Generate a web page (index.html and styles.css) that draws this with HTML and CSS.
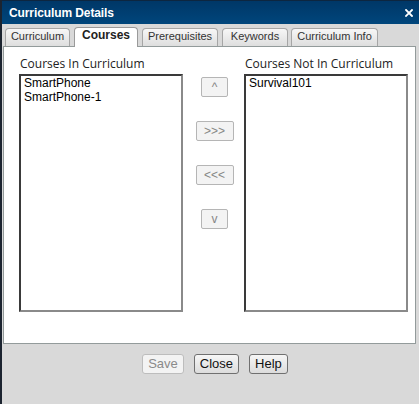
FILE: index.html
```html
<!DOCTYPE html>
<html>
<head>
<meta charset="utf-8">
<link rel="stylesheet" href="styles.css">
</head>
<body>
<div class="dialog">
  <div class="titlebar">
    <span class="title">Curriculum Details</span>
    <svg class="close" width="8" height="8" viewBox="0 0 8 8"><path d="M1 1L7 7M7 1L1 7" stroke="#fff" stroke-width="1.8" stroke-linecap="square"/></svg>
  </div>
  <div class="tabs">
    <div class="tab t-curr">Curriculum</div>
    <div class="tab active t-courses">Courses</div>
    <div class="tab t-prereq">Prerequisites</div>
    <div class="tab t-keys">Keywords</div>
    <div class="tab t-info">Curriculum Info</div>
  </div>
  <div class="panel">
    <div class="col">
      <div class="label">Courses In Curriculum</div>
      <div class="list">
        <div class="item">SmartPhone</div>
        <div class="item">SmartPhone-1</div>
      </div>
    </div>
    <div class="mid">
      <button class="mv small">^</button>
      <button class="mv wide">&gt;&gt;&gt;</button>
      <button class="mv wide">&lt;&lt;&lt;</button>
      <button class="mv small">v</button>
    </div>
    <div class="col">
      <div class="label">Courses Not In Curriculum</div>
      <div class="list">
        <div class="item">Survival101</div>
      </div>
    </div>
  </div>
  <div class="footer">
    <button class="btn disabled">Save</button>
    <button class="btn">Close</button>
    <button class="btn">Help</button>
  </div>
</div>
</body>
</html>
```
FILE: styles.css
```css
html, body {
  margin: 0;
  padding: 0;
}
body {
  width: 419px;
  height: 404px;
  overflow: hidden;
  background: #d9d9d9;
}
.dialog {
  box-sizing: border-box;
  width: 419px;
  height: 404px;
  border-left: 2px solid #1c2430;
  background: #d9d9d9;
  display: flex;
  flex-direction: column;
}
.titlebar {
  box-sizing: border-box;
  height: 24px;
  flex: none;
  background: linear-gradient(#003767, #00467c);
  border-top: 1px solid #0d2640;
  display: flex;
  align-items: center;
  justify-content: space-between;
  padding: 0 6px 0 7px;
}
.title {
  font-family: "Liberation Sans", Arial, sans-serif;
  font-weight: bold;
  font-size: 12px;
  letter-spacing: -0.1px;
  color: #fff;
  line-height: 22px;
}
.close {
  display: block;
  margin-top: 1px;
}
.tabs {
  height: 22px;
  flex: none;
  display: flex;
  align-items: flex-end;
  gap: 4px;
  padding-left: 3px;
  position: relative;
  z-index: 1;
}
.tab {
  box-sizing: border-box;
  height: 18px;
  padding: 0;
  text-align: center;
  white-space: nowrap;
  border: 1px solid #a6a6a6;
  border-bottom: none;
  border-radius: 4px 4px 0 0;
  background: linear-gradient(#f7f7f7, #dedede);
  font-family: "Liberation Sans", Arial, sans-serif;
  font-size: 11px;
  line-height: 15px;
  color: #333;
}
.t-curr { width: 65px; }
.t-courses { width: 64px; }
.t-prereq { width: 76px; }
.t-keys { width: 66px; }
.t-info { width: 87px; margin-left: -1px; }
.tab.active {
  height: 20px;
  margin-bottom: -1px;
  background: #fff;
  border-color: #9a9a9a;
  font-weight: bold;
  font-size: 12px;
  color: #222;
}
.panel {
  box-sizing: border-box;
  margin: 0 3px 0 1px;
  height: 298px;
  flex: none;
  background: #fff;
  border: 1px solid #939b9b;
  padding: 9px 7px 0 15px;
  display: flex;
}
.col {
  width: 164px;
  display: flex;
  flex-direction: column;
}
.label {
  font-family: "Open Sans", sans-serif;
  font-size: 12px;
  line-height: 16px;
  color: #222;
  margin: 0 0 2px 1px;
  white-space: nowrap;
}
.list {
  box-sizing: border-box;
  width: 164px;
  height: 238px;
  border: 2px solid;
  border-color: #3a3a3a #8a8a8a #8a8a8a #3a3a3a;
  padding: 0 3px;
  background: #fff;
}
.item {
  font-family: "Liberation Sans", Arial, sans-serif;
  font-size: 12px;
  line-height: 14px;
  color: #000;
}
.mid {
  width: 61px;
  display: flex;
  flex-direction: column;
  align-items: center;
  gap: 24px;
  padding-top: 21px;
  padding-left: 2px;
}
.mv {
  box-sizing: border-box;
  height: 20px;
  margin: 0;
  padding: 0;
  background: #f3f3f3;
  border: 1px solid #b5b5b5;
  border-radius: 2px;
  font-family: "Liberation Sans", Arial, sans-serif;
  font-size: 12px;
  line-height: 18px;
  color: #868686;
}
.mv.small {
  width: 27px;
}
.mv.wide {
  width: 38px;
}
.footer {
  flex: 1;
  display: flex;
  justify-content: center;
  align-items: flex-start;
  gap: 10px;
  padding: 10px 0 0 9px;
}
.btn {
  box-sizing: border-box;
  height: 20px;
  margin: 0;
  padding: 0 5px;
  border: 1px solid #707070;
  border-radius: 3px;
  background: linear-gradient(#f6f6f6, #dcdcdc);
  font-family: "Liberation Sans", Arial, sans-serif;
  font-size: 13px;
  line-height: 18px;
  color: #111;
}
.btn.disabled {
  border-color: #bdbdbd;
  background: #f3f3f3;
  color: #8a8a8a;
}
```
